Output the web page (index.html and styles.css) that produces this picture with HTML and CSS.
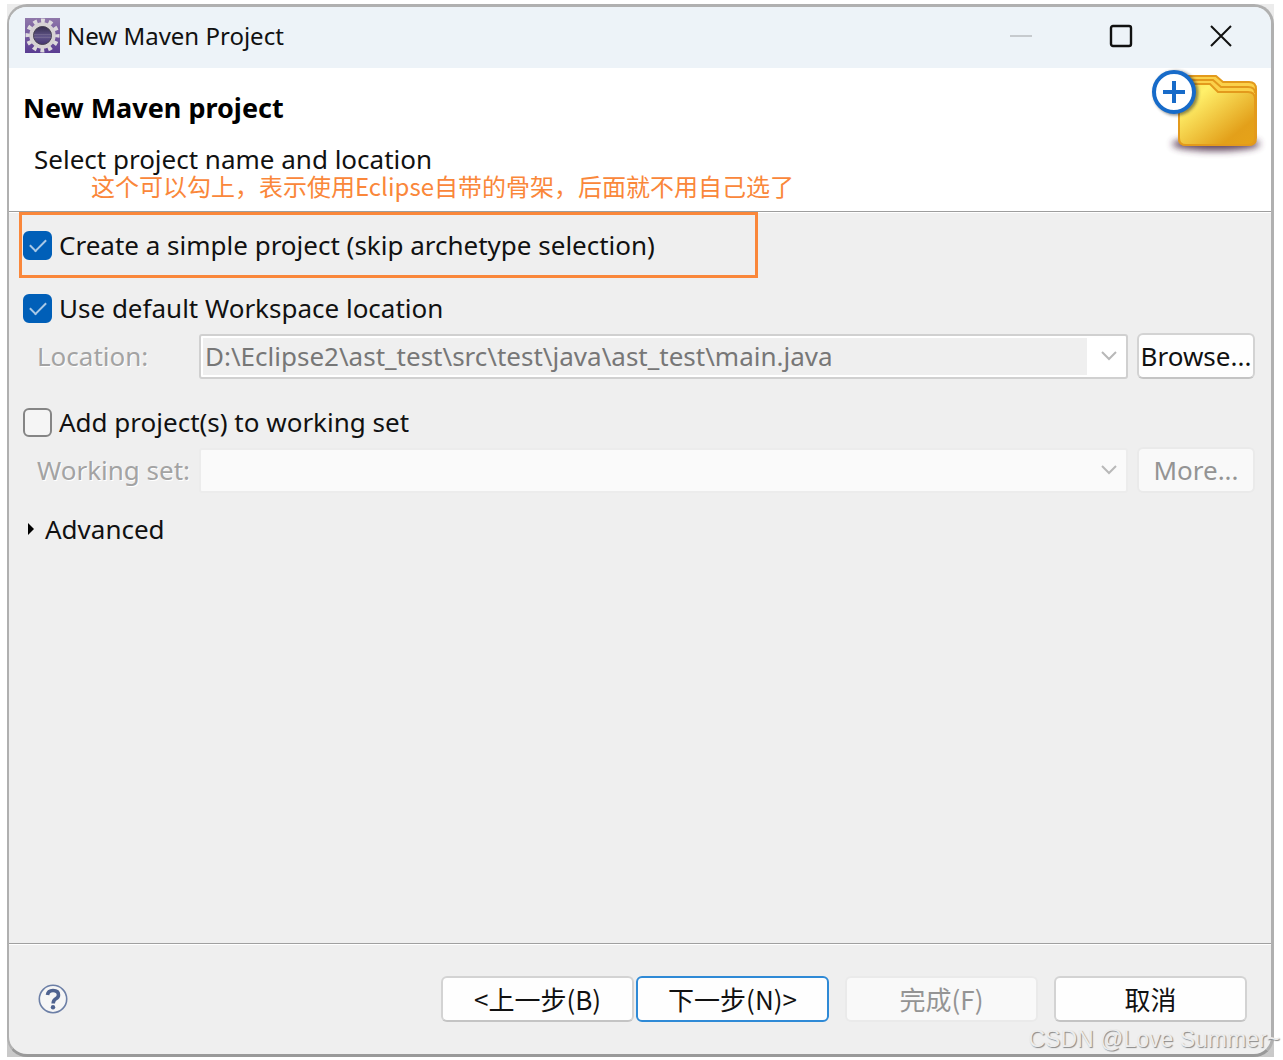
FILE: index.html
```html
<!DOCTYPE html>
<html lang="en">
<head>
  <meta charset="utf-8">
  <meta name="viewport" content="width=device-width, initial-scale=1">
  <title>New Maven Project</title>
  <link rel="stylesheet" href="styles.css">
</head>
<body>
  <div class="backdrop">
    <div class="window">

      <!-- Title bar -->
      <div class="titlebar">
        <svg class="app-icon" viewBox="0 0 35 35" aria-hidden="true">
          <defs>
            <linearGradient id="appBg" x1="0" y1="0" x2="0" y2="1">
              <stop offset="0" stop-color="#8f78aa"/>
              <stop offset="1" stop-color="#5a3c92"/>
            </linearGradient>
            <linearGradient id="appCore" x1="0" y1="0" x2="0" y2="1">
              <stop offset="0" stop-color="#2b2440"/>
              <stop offset="0.55" stop-color="#62578a"/>
              <stop offset="1" stop-color="#3a2a68"/>
            </linearGradient>
          </defs>
          <rect width="35" height="35" fill="url(#appBg)"/>
          <circle cx="17.5" cy="17.5" r="14.8" fill="none" stroke="#dcd9dc" stroke-width="4.4" stroke-dasharray="3.9 3.85" stroke-dashoffset="1.95"/>
          <circle cx="17.5" cy="17.5" r="11.2" fill="url(#appCore)" stroke="#d6d2d4" stroke-width="4"/>
          <circle cx="17.5" cy="17.5" r="9" fill="none" stroke="#4a4553" stroke-width="1"/>
          <path d="M9 16.500h17M9 19.500h17" stroke="#85799c" stroke-width="1" opacity="0.5"/>
        </svg>
        <span class="titlebar-text">New Maven Project</span>
        <div class="window-controls">
          <button class="window-btn" aria-label="Minimize" disabled>
            <svg viewBox="0 0 24 24"><path d="M1 12h22" stroke="#b9bdc1" stroke-width="1.5"/></svg>
          </button>
          <button class="window-btn" aria-label="Maximize">
            <svg viewBox="0 0 24 24"><rect x="2" y="2" width="20" height="20" rx="2" fill="none" stroke="#111" stroke-width="2.4"/></svg>
          </button>
          <button class="window-btn" aria-label="Close">
            <svg viewBox="0 0 24 24"><path d="M2 2l20 20M22 2L2 22" stroke="#111" stroke-width="2"/></svg>
          </button>
        </div>
      </div>

      <!-- Wizard header -->
      <div class="header">
        <h1>New Maven project</h1>
        <p>Select project name and location</p>
        <p class="note" lang="zh-CN">这个可以勾上，表示使用Eclipse自带的骨架，后面就不用自己选了</p>
        <svg class="banner" viewBox="0 0 116 92" aria-hidden="true">
          <defs>
            <linearGradient id="folder" x1="0" y1="0" x2="1" y2="1">
              <stop offset="0" stop-color="#f8dc50"/>
              <stop offset="0.22" stop-color="#fff06a"/>
              <stop offset="0.78" stop-color="#e3a01a"/>
              <stop offset="1" stop-color="#e6a318"/>
            </linearGradient>
            <filter id="soft" x="-20%" y="-80%" width="140%" height="260%">
              <feGaussianBlur stdDeviation="3.5"/>
            </filter>
            <filter id="softSmall" x="-20%" y="-20%" width="140%" height="140%">
              <feGaussianBlur stdDeviation="1.5"/>
            </filter>
          </defs>
          <ellipse cx="65" cy="76" rx="44" ry="7" fill="#4c2b45" opacity="0.85" filter="url(#soft)"/>
          <path d="M28 70V14Q28 8 34 8H65L72 14H98Q105 14 105 21V70Q105 77 98 77H35Q28 77 28 70Z" fill="#fbd14a" stroke="#e39a1c" stroke-width="2"/>
          <path d="M34 12H62L70 19H97Q104 19 104 25" fill="none" stroke="#e39a1c" stroke-width="2"/>
          <path d="M28 70V22Q28 16 34 16H59L67 24H97Q104 24 104 31V70Q104 77 97 77H35Q28 77 28 70Z" fill="url(#folder)" stroke="#e39a1c" stroke-width="2"/>
          <circle cx="25" cy="25" r="20" fill="none" stroke="#222" stroke-width="5" opacity="0.5" filter="url(#softSmall)"/>
          <circle cx="23" cy="24" r="20" fill="#fff" stroke="#176bc9" stroke-width="4"/>
          <path d="M12 24H34M23 13V35" stroke="#176bc9" stroke-width="4"/>
        </svg>
      </div>

      <!-- Wizard page -->
      <div class="page">
        <div class="highlight"></div>

        <label class="check">
          <input type="checkbox" checked>
          <span>Create a simple project (skip archetype selection)</span>
        </label>

        <label class="check check-workspace">
          <input type="checkbox" checked>
          <span>Use default Workspace location</span>
        </label>
        <div class="field">
          <label for="location">Location:</label>
          <div class="combo">
            <input id="location" type="text" value="D:\Eclipse2\ast_test\src\test\java\ast_test\main.java" disabled>
            <svg class="chevron" viewBox="0 0 18 18" aria-hidden="true"><path d="M2 5l7 7 7-7"/></svg>
          </div>
          <button class="btn">Browse...</button>
        </div>

        <label class="check check-set">
          <input type="checkbox">
          <span>Add project(s) to working set</span>
        </label>
        <div class="field">
          <label for="workingSet">Working set:</label>
          <div class="combo combo-disabled">
            <select id="workingSet" disabled><option></option></select>
            <svg class="chevron" viewBox="0 0 18 18" aria-hidden="true"><path d="M2 5l7 7 7-7"/></svg>
          </div>
          <button class="btn" disabled>More...</button>
        </div>

        <button class="advanced" aria-expanded="false">
          <svg viewBox="0 0 8 14" aria-hidden="true"><path d="M1 1l6 6-6 6z"/></svg>
          Advanced
        </button>
      </div>

      <!-- Footer buttons -->
      <div class="footer" lang="zh-CN">
        <button class="help" aria-label="Help">
          <svg viewBox="0 0 30 30">
            <circle cx="15" cy="15" r="13.7" fill="#f6f6f6" stroke="#6c7fa6" stroke-width="1.6"/>
            <path d="M9.500 11Q10 6.500 15 6.500Q20.500 6.500 20.500 11Q20.500 13.500 17.500 15Q15.200 16.500 15.200 19.500" fill="none" stroke="#4f6390" stroke-width="3.6"/>
            <circle cx="15" cy="23.200" r="2.200" fill="#4f6390"/>
          </svg>
        </button>
        <div class="nav">
          <button class="btn">&lt;上一步(B)</button>
          <button class="btn btn-default">下一步(N)&gt;</button>
        </div>
        <button class="btn" disabled>完成(F)</button>
        <button class="btn">取消</button>
      </div>
    </div>

    <div class="watermark">CSDN @Love Summer~</div>
  </div>
</body>
</html>
```

FILE: styles.css
```css
* {
  box-sizing: border-box;
}

body {
  margin: 0;
  padding: 4px 9px 3px 7px;
  background: #fff;
  color: #111;
  font-family: "Noto Sans", "Noto Sans CJK SC", sans-serif;
  font-size: 26px;
  line-height: 36px;
}

h1, p {
  margin: 0;
}

button, input, select {
  font: inherit;
  color: inherit;
}

/* =====================
   WINDOW
   ===================== */
.backdrop {
  position: relative;
  display: flex;
  min-height: calc(100vh - 7px);
  background: linear-gradient(#ececec, #c9c9c9);
}

.window {
  flex: 1;
  display: flex;
  flex-direction: column;
  border: 3px solid #b0b0b0;
  border-bottom-color: #999;
  border-left-width: 2px;
  border-radius: 20px;
  background: #efefef;
  overflow: hidden;
}

.titlebar {
  display: flex;
  align-items: center;
  height: 61px;
  padding: 0 0 4px 16px;
  background: #edf3f8;
  font-size: 24px;
}

.app-icon {
  width: 35px;
  height: 35px;
  margin-right: 7px;
}

.window-controls {
  display: flex;
  margin-left: auto;
}

.window-btn {
  display: flex;
  align-items: center;
  justify-content: center;
  width: 100px;
  height: 56px;
  padding: 0;
  border: none;
  background: none;
}

.window-btn svg {
  width: 24px;
  height: 24px;
}

/* =====================
   HEADER
   ===================== */
.header {
  position: relative;
  height: 144px;
  padding: 22px 14px 0;
  border-bottom: 1px solid #9d9d9d;
  background: #fff;
}

.header h1 {
  color: #000;
  font-size: 27px;
  font-weight: 700;
  line-height: 36px;
}

.header p {
  padding: 15px 0 0 11px;
}

/* Orange note and frame lie over the dialog */
.header .note {
  position: absolute;
  top: 100px;
  left: 82px;
  padding: 0;
  color: #fa873a;
  font-family: "Noto Sans CJK SC", sans-serif;
  font-size: 24px;
  white-space: nowrap;
}

.highlight {
  position: absolute;
  top: -1px;
  left: 10px;
  width: 739px;
  height: 66px;
  border: 3px solid #fa873a;
  pointer-events: none;
}

.banner {
  position: absolute;
  top: 0;
  right: 4px;
  width: 116px;
  height: 92px;
}

/* =====================
   PAGE
   ===================== */
.page {
  position: relative;
  flex: 1;
  padding: 14px 16px 0 14px;
  border-top: 1px solid #fff;
}

.check {
  display: flex;
  align-items: center;
  gap: 7px;
  width: fit-content;
}

.check-workspace {
  margin-top: 27px;
}

.check-set {
  margin-top: 25px;
}

.check input {
  appearance: none;
  width: 29px;
  height: 29px;
  margin: 0;
  border: 2px solid #858585;
  border-radius: 6px;
  background: #f5f5f5;
}

.check input:checked {
  display: flex;
  align-items: center;
  justify-content: center;
  border-color: #005fb8;
  background: #005fb8;
}

.check input:checked::before {
  content: "";
  width: 14px;
  height: 7px;
  margin-top: -4px;
  border: solid #a9c9e6;
  border-width: 0 0 2px 2px;
  transform: rotate(-45deg);
}

.field {
  display: grid;
  grid-template-columns: 176px 1fr 118px;
  align-items: center;
  margin-top: 7px;
}

.field > label {
  padding-left: 14px;
  color: #a3a3a3;
  text-shadow: 1px 1px #fff;
  white-space: nowrap;
}

.combo {
  display: flex;
  align-items: center;
  height: 45px;
  margin-right: 9px;
  padding: 2px;
  border: 2px solid #d0d0d0;
  border-radius: 3px;
  background: #fff;
}

.combo input,
.combo select {
  appearance: none;
  flex: 1;
  min-width: 0;
  height: 37px;
  padding: 0 2px;
  border: none;
  background: #efefef;
  color: #777;
  opacity: 1;
}

.combo-disabled {
  border-color: #ececec;
  background: #fafafa;
}

.combo-disabled select {
  background: none;
}

.chevron {
  width: 18px;
  height: 18px;
  margin: 0 6px 0 13px;
  fill: none;
  stroke: #b8b8b8;
  stroke-width: 2;
}

.btn {
  height: 46px;
  padding: 0;
  border: 2px solid #d3d3d3;
  border-bottom-color: #c4c4c4;
  border-radius: 6px;
  background: #fefefe;
  white-space: nowrap;
}

.btn:disabled {
  border-color: #eaeaea;
  background: #f9f9f9;
  color: #949494;
}

.advanced {
  display: flex;
  align-items: center;
  gap: 10px;
  margin-top: 18px;
  padding: 0 0 0 4px;
  border: none;
  background: none;
}

.advanced svg {
  width: 8px;
  height: 14px;
}

/* =====================
   FOOTER
   ===================== */
.footer {
  display: flex;
  align-items: center;
  gap: 16px;
  height: 111px;
  padding: 0 24px 0 29px;
  border-top: 1px solid #a0a0a0;
  box-shadow: inset 0 1px #fff;
  font-family: "Noto Sans CJK SC", sans-serif;
}

.footer .btn {
  width: 193px;
}

.help {
  display: flex;
  margin-right: auto;
  padding: 0;
  border: none;
  background: none;
}

.help svg {
  width: 30px;
  height: 30px;
}

.nav {
  display: flex;
  gap: 2px;
}

.footer .btn-default {
  border-color: #2f8ad6;
}

.watermark {
  position: absolute;
  right: -6px;
  bottom: 0;
  color: #ececec;
  font-family: "Liberation Sans", sans-serif;
  font-size: 23px;
  text-shadow: 1px 1px 1px #888;
  white-space: nowrap;
}
```
